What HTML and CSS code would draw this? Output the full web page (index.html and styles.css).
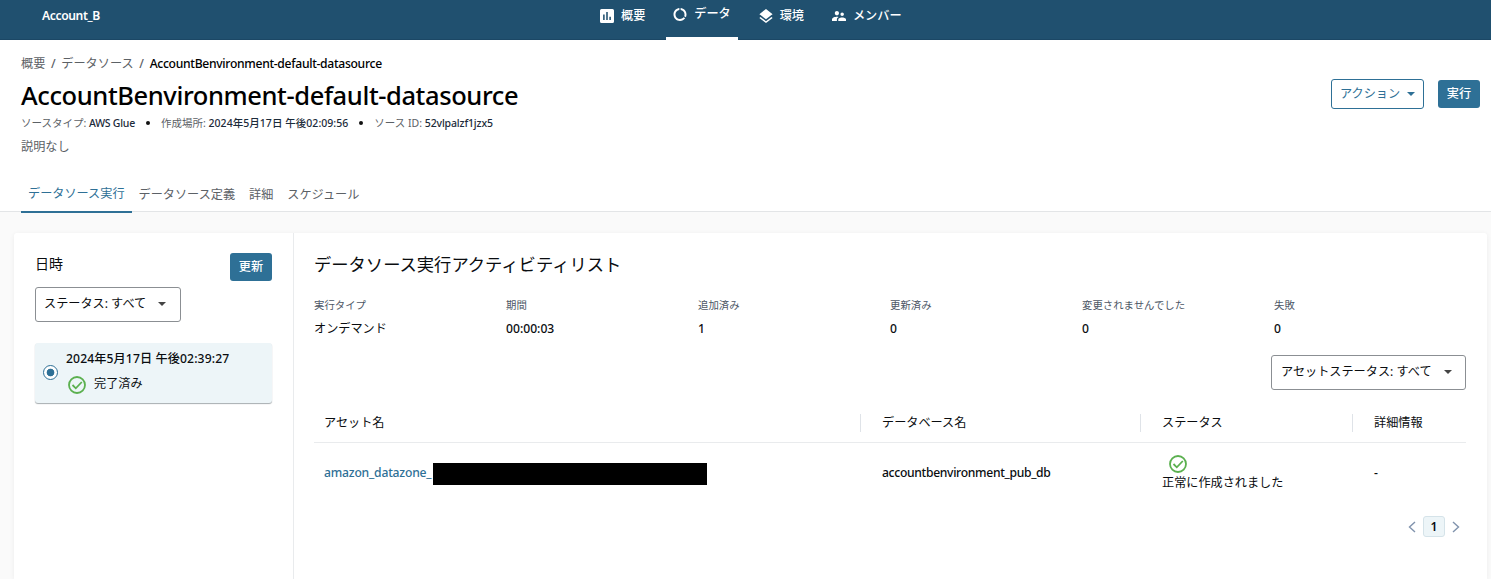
FILE: index.html
```html
<!DOCTYPE html>
<html lang="ja">
<head>
    <meta charset="UTF-8">
    <meta name="viewport" content="width=device-width, initial-scale=1.0">
    <title>AccountBenvironment-default-datasource</title>
    <link rel="stylesheet" href="styles.css">
</head>
<body>
    <header class="topbar">
        <div class="project-name"><span class="project-text">Account_B</span></div>
        <nav class="main-nav">
            <a class="nav-item">
                <svg class="nav-icon" viewBox="3 3 18 18"><path d="M19 3H5a2 2 0 0 0-2 2v14a2 2 0 0 0 2 2h14a2 2 0 0 0 2-2V5a2 2 0 0 0-2-2zM9 17H7v-7h2v7zm4 0h-2V7h2v10zm4 0h-2v-4h2v4z"/></svg>
                <span>概要</span>
            </a>
            <a class="nav-item active">
                <svg class="nav-icon" viewBox="2 2 20 20"><path d="M13 2.05v3.03c3.39.49 6 3.39 6 6.92 0 .9-.18 1.75-.48 2.54l2.6 1.53c.56-1.24.88-2.62.88-4.07 0-5.18-3.95-9.45-9-9.95zM12 19c-3.87 0-7-3.13-7-7 0-3.53 2.61-6.43 6-6.92V2.05c-5.06.5-9 4.76-9 9.95 0 5.52 4.47 10 9.99 10 3.31 0 6.24-1.61 8.06-4.09l-2.6-1.53C16.17 17.98 14.21 19 12 19z"/></svg>
                <span>データ</span>
            </a>
            <a class="nav-item">
                <svg class="nav-icon" viewBox="2.5 1.5 19 20"><path d="M11.99 18.54l-7.37-5.73L3 14.07l9 7 9-7-1.63-1.27-7.38 5.74zM12 16l7.36-5.73L21 9l-9-7-9 7 1.63 1.27L12 16z"/></svg>
                <span>環境</span>
            </a>
            <a class="nav-item members">
                <svg class="nav-icon" viewBox="2 2 20 20"><path d="M16.5 12c1.38 0 2.49-1.12 2.49-2.5S17.88 7 16.5 7a2.5 2.5 0 0 0 0 5zM9 11c1.66 0 2.99-1.34 2.99-3S10.66 5 9 5 6 6.34 6 8s1.34 3 3 3zm7.5 3c-1.83 0-5.5.92-5.5 2.75V19h11v-2.25c0-1.83-3.67-2.75-5.5-2.75zM9 13c-2.33 0-7 1.17-7 3.5V19h7v-2.25c0-.85.33-2.34 2.37-3.47C10.5 13.1 9.66 13 9 13z"/></svg>
                <span>メンバー</span>
            </a>
        </nav>
    </header>

    <section class="page-header">
        <div class="title-row">
            <div class="title-block">
                <div class="breadcrumb">
                    <span>概要</span><i>/</i><span>データソース</span><i>/</i><b>AccountBenvironment-default-datasource</b>
                </div>
                <h1>AccountBenvironment-default-datasource</h1>
                <div class="meta">
                    <span>ソースタイプ: <b class="meta-glue">AWS Glue</b></span>
                    <span class="dot"></span>
                    <span>作成場所: <b class="meta-date">2024年5月17日 午後02:09:56</b></span>
                    <span class="dot"></span>
                    <span>ソース ID: <b class="meta-id">52vlpalzf1jzx5</b></span>
                </div>
                <div class="description">説明なし</div>
            </div>
            <div class="actions">
                <button class="btn-outline">アクション<span class="caret"></span></button>
                <button class="btn">実行</button>
            </div>
        </div>
        <div class="tabs">
            <a class="tab active">データソース実行</a>
            <a class="tab">データソース定義</a>
            <a class="tab">詳細</a>
            <a class="tab">スケジュール</a>
        </div>
    </section>

    <main class="card">
        <aside class="runs">
            <div class="runs-header">
                <h3>日時</h3>
                <button class="btn">更新</button>
            </div>
            <button class="select">ステータス: すべて<span class="caret"></span></button>
            <div class="run-item">
                <span class="radio"></span>
                <div class="run-info">
                    <div class="run-date">2024年5月17日 午後02:39:27</div>
                    <div class="run-status">
                        <svg class="check" viewBox="0 0 18 18"><circle cx="9" cy="9" r="8"/><path d="M4.5 9l3.300 3.300 6-6.300"/></svg>
                        <span>完了済み</span>
                    </div>
                </div>
            </div>
        </aside>

        <section class="activity">
            <h2>データソース実行アクティビティリスト</h2>
            <dl class="summary">
                <div><dt>実行タイプ</dt><dd>オンデマンド</dd></div>
                <div><dt>期間</dt><dd>00:00:03</dd></div>
                <div><dt>追加済み</dt><dd>1</dd></div>
                <div><dt>更新済み</dt><dd>0</dd></div>
                <div><dt>変更されませんでした</dt><dd>0</dd></div>
                <div><dt>失敗</dt><dd>0</dd></div>
            </dl>
            <div class="filter">
                <button class="select">アセットステータス: すべて<span class="caret"></span></button>
            </div>
            <div class="table">
                <div class="table-row table-head">
                    <div class="cell">アセット名</div>
                    <div class="cell">データベース名</div>
                    <div class="cell">ステータス</div>
                    <div class="cell">詳細情報</div>
                </div>
                <div class="table-row table-body">
                    <div class="cell asset"><a>amazon_datazone_</a><span class="redacted"></span></div>
                    <div class="cell"><span class="db-name">accountbenvironment_pub_db</span></div>
                    <div class="cell created">
                        <svg class="check" viewBox="0 0 18 18"><circle cx="9" cy="9" r="8"/><path d="M4.5 9l3.300 3.300 6-6.300"/></svg>
                        <span>正常に作成されました</span>
                    </div>
                    <div class="cell">-</div>
                </div>
            </div>
            <div class="pagination">
                <svg class="arrow" viewBox="0 0 8 12"><path d="M7 1L1.5 6 7 11"/></svg>
                <span class="page">1</span>
                <svg class="arrow" viewBox="0 0 8 12"><path d="M1 1l5.5 5L1 11"/></svg>
            </div>
        </section>
    </main>
</body>
</html>
```
FILE: styles.css
```css
:root {
    --primary-color: #2e7096;
    --topbar-color: #20506f;
    --text-color: #0a0d10;
    --muted-color: #5c6166;
    --line-color: #e9ebed;
    --green: #5bb04f;
}
* {
    box-sizing: border-box;
}
body {
    margin: 0;
    height: 579px;
    overflow: hidden;
    display: flex;
    flex-direction: column;
    font-family: 'Noto Sans', 'Noto Sans CJK JP', sans-serif;
    font-size: 12.15px;
    line-height: 18px;
    color: var(--text-color);
    background-color: #fafafa;
}
h1, h2, h3, dl, dd {
    margin: 0;
    font-weight: 400;
}
b {
    font-weight: 500;
}
button {
    font: inherit;
}
.topbar {
    flex: none;
    display: flex;
    height: 40px;
    background-color: var(--topbar-color);
    border-bottom: 1px solid #1b4765;
    color: #fff;
    font-weight: 500;
}
.project-name {
    width: 600px;
    padding: 7px 0 0 42px;
    font-weight: 600;
}
.project-text {
    letter-spacing: -0.4px;
}
.main-nav {
    display: flex;
}
.nav-item {
    display: flex;
    gap: 7px;
    height: 40px;
    padding-top: 7px;
    margin-right: 21px;
}
.nav-item.active {
    padding: 5px 7px 0;
    border-bottom: 3px solid #fff;
}
.nav-item.members {
    margin-left: 7px;
}
.nav-icon {
    width: 14px;
    height: 18px;
    fill: #fff;
}
.nav-item.active .nav-icon {
    height: 13px;
    margin-top: 3px;
}
.page-header {
    flex: none;
    height: 172px;
    padding: 15px 11px 0 21px;
    background-color: #fff;
    border-bottom: 1px solid #e3e5e7;
}
.title-row {
    display: flex;
    justify-content: space-between;
    height: 122px;
}
.breadcrumb {
    display: flex;
    color: var(--muted-color);
}
.breadcrumb i {
    padding: 0 5.7px;
    font-style: normal;
    font-weight: 500;
}
.breadcrumb b {
    color: #000;
    letter-spacing: -0.31px;
}
h1 {
    margin-top: 4px;
    font-size: 25.5px;
    font-weight: 500;
    line-height: 36px;
    letter-spacing: -0.4px;
    color: #000;
}
.meta {
    display: flex;
    align-items: center;
    height: 19px;
    font-size: 10.5px;
    color: var(--muted-color);
}
.meta b {
    color: #1c2b3a;
}
.meta-glue {
    letter-spacing: -0.25px;
}
.meta-date {
    letter-spacing: 0.04px;
}
.meta-id {
    letter-spacing: -0.15px;
}
.dot {
    width: 4px;
    height: 4px;
    margin: 0 11px;
    border-radius: 50%;
    background-color: #111;
}
.description {
    margin-top: 6px;
    color: var(--muted-color);
}
.actions {
    display: flex;
    align-items: flex-start;
    gap: 14px;
    padding-top: 24px;
}
.btn, .btn-outline {
    height: 28px;
    padding: 0;
    border: none;
    border-radius: 3px;
}
.btn {
    width: 42px;
    background-color: var(--primary-color);
    color: #fff;
    font-weight: 500;
}
.actions .btn {
    margin-top: 1px;
}
.btn-outline {
    display: flex;
    align-items: center;
    width: 93px;
    height: 30px;
    padding-left: 8px;
    border: 1px solid var(--primary-color);
    background-color: #fff;
    color: var(--primary-color);
}
.caret {
    border: 4px solid transparent;
    border-top-color: currentColor;
    border-bottom: none;
}
.btn-outline .caret {
    margin-left: 7px;
}
.tabs {
    display: flex;
    height: 36px;
    color: var(--muted-color);
}
.tab {
    padding: 9px 7px 0;
}
.tab.active {
    height: 36px;
    padding-top: 8px;
    border-bottom: 2px solid var(--primary-color);
    color: var(--primary-color);
}
.card {
    flex: 1;
    display: flex;
    margin: 21px 4px 0 14px;
    background-color: #fff;
    border-radius: 3px 3px 0 0;
    box-shadow: 0 1px 5px rgba(0, 20, 40, 0.06);
}
.runs {
    width: 280px;
    padding: 20px 21px 0;
    border-right: 1px solid var(--line-color);
}
.runs-header {
    display: flex;
    justify-content: space-between;
}
.runs-header h3 {
    padding-top: 2px;
    font-size: 14px;
}
.select {
    display: flex;
    align-items: center;
    height: 35px;
    padding: 0 13px 1px 9px;
    border: 1px solid #8b8f93;
    border-radius: 3px;
    background-color: #fff;
    color: var(--text-color);
}
.select .caret {
    margin-left: 12px;
    color: #444;
}
.filter .select {
    width: 195px;
}
.runs .select {
    width: 146px;
    margin-top: 6px;
    padding-left: 8px;
}
.run-item {
    display: flex;
    height: 60px;
    margin-top: 21px;
    padding: 7px 8px 0;
    border-radius: 3px;
    background-color: #edf5f8;
    box-shadow: 0 1px 1px rgba(0, 20, 30, 0.35);
}
.radio {
    width: 15px;
    height: 15px;
    margin: 15px 8px 0 0;
    border: 1.5px solid var(--primary-color);
    border-radius: 50%;
    background: radial-gradient(circle, var(--primary-color) 3.5px, #fff 4.2px);
}
.run-date {
    font-weight: 500;
    letter-spacing: 0.12px;
}
.run-status {
    display: flex;
    gap: 8px;
    margin-top: 7px;
    padding-left: 2px;
}
.check {
    width: 18px;
    height: 18px;
    fill: none;
    stroke: var(--green);
    stroke-width: 1.8;
}
.run-status .check {
    margin-top: 1px;
}
.activity {
    flex: 1;
    padding: 20px 21px 0 20px;
}
h2 {
    font-size: 17.3px;
    line-height: 24px;
}
.summary {
    display: grid;
    grid-template-columns: repeat(6, 192px);
    margin-top: 19px;
}
.summary dt {
    font-size: 10.4px;
    color: #4d5766;
}
.summary dd {
    margin-top: 6px;
    font-weight: 500;
}
.summary div:first-child dd {
    font-weight: 400;
}
.filter {
    display: flex;
    justify-content: flex-end;
    margin-top: 17px;
}
.table {
    margin-top: 13px;
}
.table-row {
    display: grid;
    grid-template-columns: 546px 280px 212px 1fr;
}
.table-head {
    height: 40px;
    padding-top: 11px;
    border-bottom: 1px solid var(--line-color);
}
.cell {
    padding-left: 21px;
}
.cell:first-child {
    padding-left: 10px;
}
.table-head .cell {
    height: 18px;
}
.table-head .cell + .cell {
    border-left: 1px solid #dfe3e8;
}
.table-body {
    height: 60px;
    align-items: center;
    font-weight: 500;
}
.table-body .cell + .cell {
    padding-left: 22px;
}
.asset {
    display: flex;
    align-items: center;
    color: var(--primary-color);
}
.asset a {
    width: 109px;
    letter-spacing: -0.2px;
}
.redacted {
    width: 274px;
    height: 22px;
    margin-top: 2px;
    background-color: #000;
}
.db-name {
    letter-spacing: -0.32px;
}
.created {
    display: flex;
    flex-direction: column;
    font-weight: 400;
}
.created .check {
    margin: 0 0 1px 7px;
}
.pagination {
    display: flex;
    justify-content: flex-end;
    align-items: center;
    gap: 7px;
    margin-top: 13px;
    padding-right: 6px;
}
.page {
    width: 22px;
    height: 21px;
    border: 1px solid #d5e3e9;
    border-radius: 3px;
    background-color: #edf5f8;
    line-height: 19px;
    text-align: center;
    font-weight: 600;
}
.arrow {
    width: 8px;
    height: 12px;
    fill: none;
    stroke: #8093ad;
    stroke-width: 1.4;
}
```
